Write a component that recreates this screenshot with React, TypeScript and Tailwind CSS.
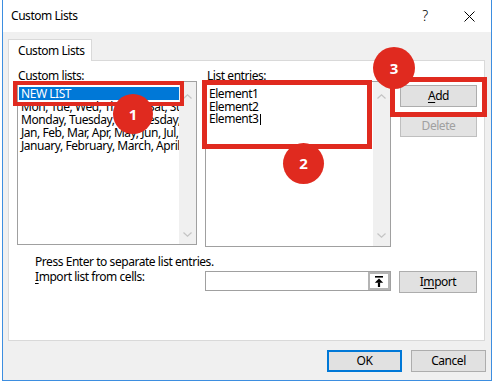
import React from "react";

function Chevron({ up }: { up?: boolean }) {
  return (
    <svg width="9" height="5" viewBox="0 0 9 5" className="block">
      <polyline
        points={up ? "0.5,4.5 4.5,0.8 8.5,4.5" : "0.5,0.5 4.5,4.2 8.5,0.5"}
        fill="none"
        stroke="#c4c4c4"
        strokeWidth="1.2"
      />
    </svg>
  );
}

function ScrollBar({ pt, pb }: { pt: string; pb: string }) {
  return (
    <div className={`w-[17px] h-full bg-[#f0f0f0] flex flex-col items-center justify-between ${pt} ${pb}`}>
      <Chevron up />
      <Chevron />
    </div>
  );
}

function Badge({ n, cls }: { n: string; cls: string }) {
  return (
    <div
      className={`absolute rounded-full bg-[#e02a1f] text-white font-bold text-[15px] tracking-normal flex items-center justify-center ${cls}`}
    >
      {n}
    </div>
  );
}

export default function App() {
  const lists = [
    "Mon, Tue, Wed, Thu, Fri, Sat, Sun",
    "Monday, Tuesday, Wednesday, Thursday, Friday, Saturday, Sunday",
    "Jan, Feb, Mar, Apr, May, Jun, Jul, Aug, Sep, Oct, Nov, Dec",
    "January, February, March, April, May, June, July, August, September, October, November, December",
  ];
  return (
    <div className="relative w-[494px] h-[382px] bg-white overflow-hidden font-['Noto_Sans',sans-serif] text-[12px] tracking-[-0.45px] text-black">
      <div className="ml-[2px] w-[490px] h-[381px] border-x border-b border-[#3d8ee0] bg-[#f0f0f0] flex flex-col">
        {/* Title bar */}
        <div className="h-[32px] shrink-0 bg-white flex items-center pl-[8px]">
          <span className="text-[12px] leading-[16px]">Custom Lists</span>
          <span className="ml-auto w-[44px] text-center text-[14px] font-light leading-[16px]">?</span>
          <span className="w-[44px] flex items-center justify-center">
            <svg width="11" height="11" viewBox="0 0 11 11">
              <line x1="0.5" y1="0.5" x2="10.5" y2="10.5" stroke="#000" strokeWidth="1" />
              <line x1="10.5" y1="0.5" x2="0.5" y2="10.5" stroke="#000" strokeWidth="1" />
            </svg>
          </span>
        </div>

        {/* Body */}
        <div className="px-[5px] pt-[7px] flex flex-col">
          <div className="relative z-10 -mb-px w-[84px] h-[22px] bg-white border border-b-0 border-[#d9d9d9] pl-[9px] flex items-center leading-[16px]">
            Custom Lists
          </div>
          <div className="w-[477px] h-[281px] bg-white border border-[#d9d9d9] pt-[8px] pl-[8px] flex flex-col">
            <div className="flex items-start">
              {/* Custom lists column */}
              <div className="w-[180px] flex flex-col">
                <div className="h-[12px] leading-[13px] pl-[1px]">Custom lists:</div>
                <div className="h-[164px] border border-[#a0a0a0] bg-white flex">
                  <div className="flex-1 min-w-0 overflow-hidden pt-[5px] whitespace-nowrap leading-[13px]">
                    <div className="ml-[1px] h-[13px] bg-[#0078d7] text-white pl-[2px]">NEW LIST</div>
                    {lists.map((l) => (
                      <div key={l} className="h-[13px] pl-[3px]">
                        {l}
                      </div>
                    ))}
                  </div>
                  <ScrollBar pt="pt-[12px]" pb="pb-[7px]" />
                </div>
              </div>

              {/* List entries column */}
              <div className="ml-[8px] w-[186px] flex flex-col">
                <div className="h-[12px] leading-[13px] pl-[2px]">List entries:</div>
                <div className="h-[166px] border border-[#a0a0a0] bg-white flex">
                  <div className="flex-1 min-w-0 overflow-hidden pt-[6px] pl-[3px] whitespace-nowrap leading-[12.5px]">
                    <div>Element1</div>
                    <div>Element2</div>
                    <div className="flex items-center">
                      Element3
                      <span className="ml-[1px] inline-block w-px h-[11px] bg-black" />
                    </div>
                  </div>
                  <ScrollBar pt="pt-[12px]" pb="pb-[8px]" />
                </div>
              </div>

              {/* Buttons column */}
              <div className="ml-[9px] mt-[16px] flex flex-col gap-[8px]">
                <button className="w-[77px] h-[22px] bg-[#e1e1e1] border border-[#adadad] leading-[16px]">
                  <span className="underline underline-offset-2">A</span>dd
                </button>
                <button className="w-[77px] h-[22px] bg-[#e3e3e3] border border-[#bfbfbf] text-[#a0a0a0] leading-[16px]">
                  Delete
                </button>
              </div>
            </div>

            {/* Bottom area */}
            <div className="mt-[8px] pl-[18px] h-[13px] leading-[13px]">Press Enter to separate list entries.</div>
            <div className="mt-[2px] pl-[18px] flex items-start">
              <div className="w-[170px] leading-[13px]">
                <span className="underline underline-offset-2">I</span>mport list from cells:
              </div>
              <div className="mt-[1px] w-[186px] h-[20px] border border-[#a0a0a0] bg-white flex justify-end">
                <div className="w-[22px] h-full border-2 border-[#b4b4b4] bg-white flex items-center justify-center">
                  <svg width="10" height="11" viewBox="0 0 10 11">
                    <rect x="1" y="0" width="8" height="1.6" fill="#000" />
                    <polygon points="5,2.4 9.2,6.8 0.8,6.8" fill="#000" />
                    <rect x="3.9" y="6.5" width="2.2" height="4.5" fill="#000" />
                  </svg>
                </div>
              </div>
              <button className="ml-[8px] mt-[1px] w-[78px] h-[22px] bg-[#e1e1e1] border border-[#adadad] leading-[16px]">
                I<span className="underline underline-offset-2">m</span>port
              </button>
            </div>
          </div>

          {/* Footer */}
          <div className="mt-[9px] flex justify-end gap-[9px]">
            <button className="w-[75px] h-[22px] bg-[#e1e1e1] border-2 border-[#0078d7] leading-[16px]">OK</button>
            <button className="w-[75px] h-[22px] bg-[#e1e1e1] border border-[#adadad] leading-[16px]">Cancel</button>
          </div>
        </div>
      </div>

      {/* Annotations */}
      <div className="absolute left-[13px] top-[81px] w-[171px] h-[25px] border-4 border-[#e02a1f]" />
      <div className="absolute left-[202px] top-[80px] w-[170px] h-[69px] border-[5px] border-[#e02a1f]" />
      <div className="absolute left-[390px] top-[77px] w-[97px] h-[40px] border-[5px] border-[#e02a1f]" />
      <Badge n="1" cls="left-[113px] top-[94px] w-[40px] h-[40px]" />
      <Badge n="2" cls="left-[283px] top-[143px] w-[41px] h-[41px]" />
      <Badge n="3" cls="left-[373px] top-[47px] w-[42px] h-[42px]" />
    </div>
  );
}
